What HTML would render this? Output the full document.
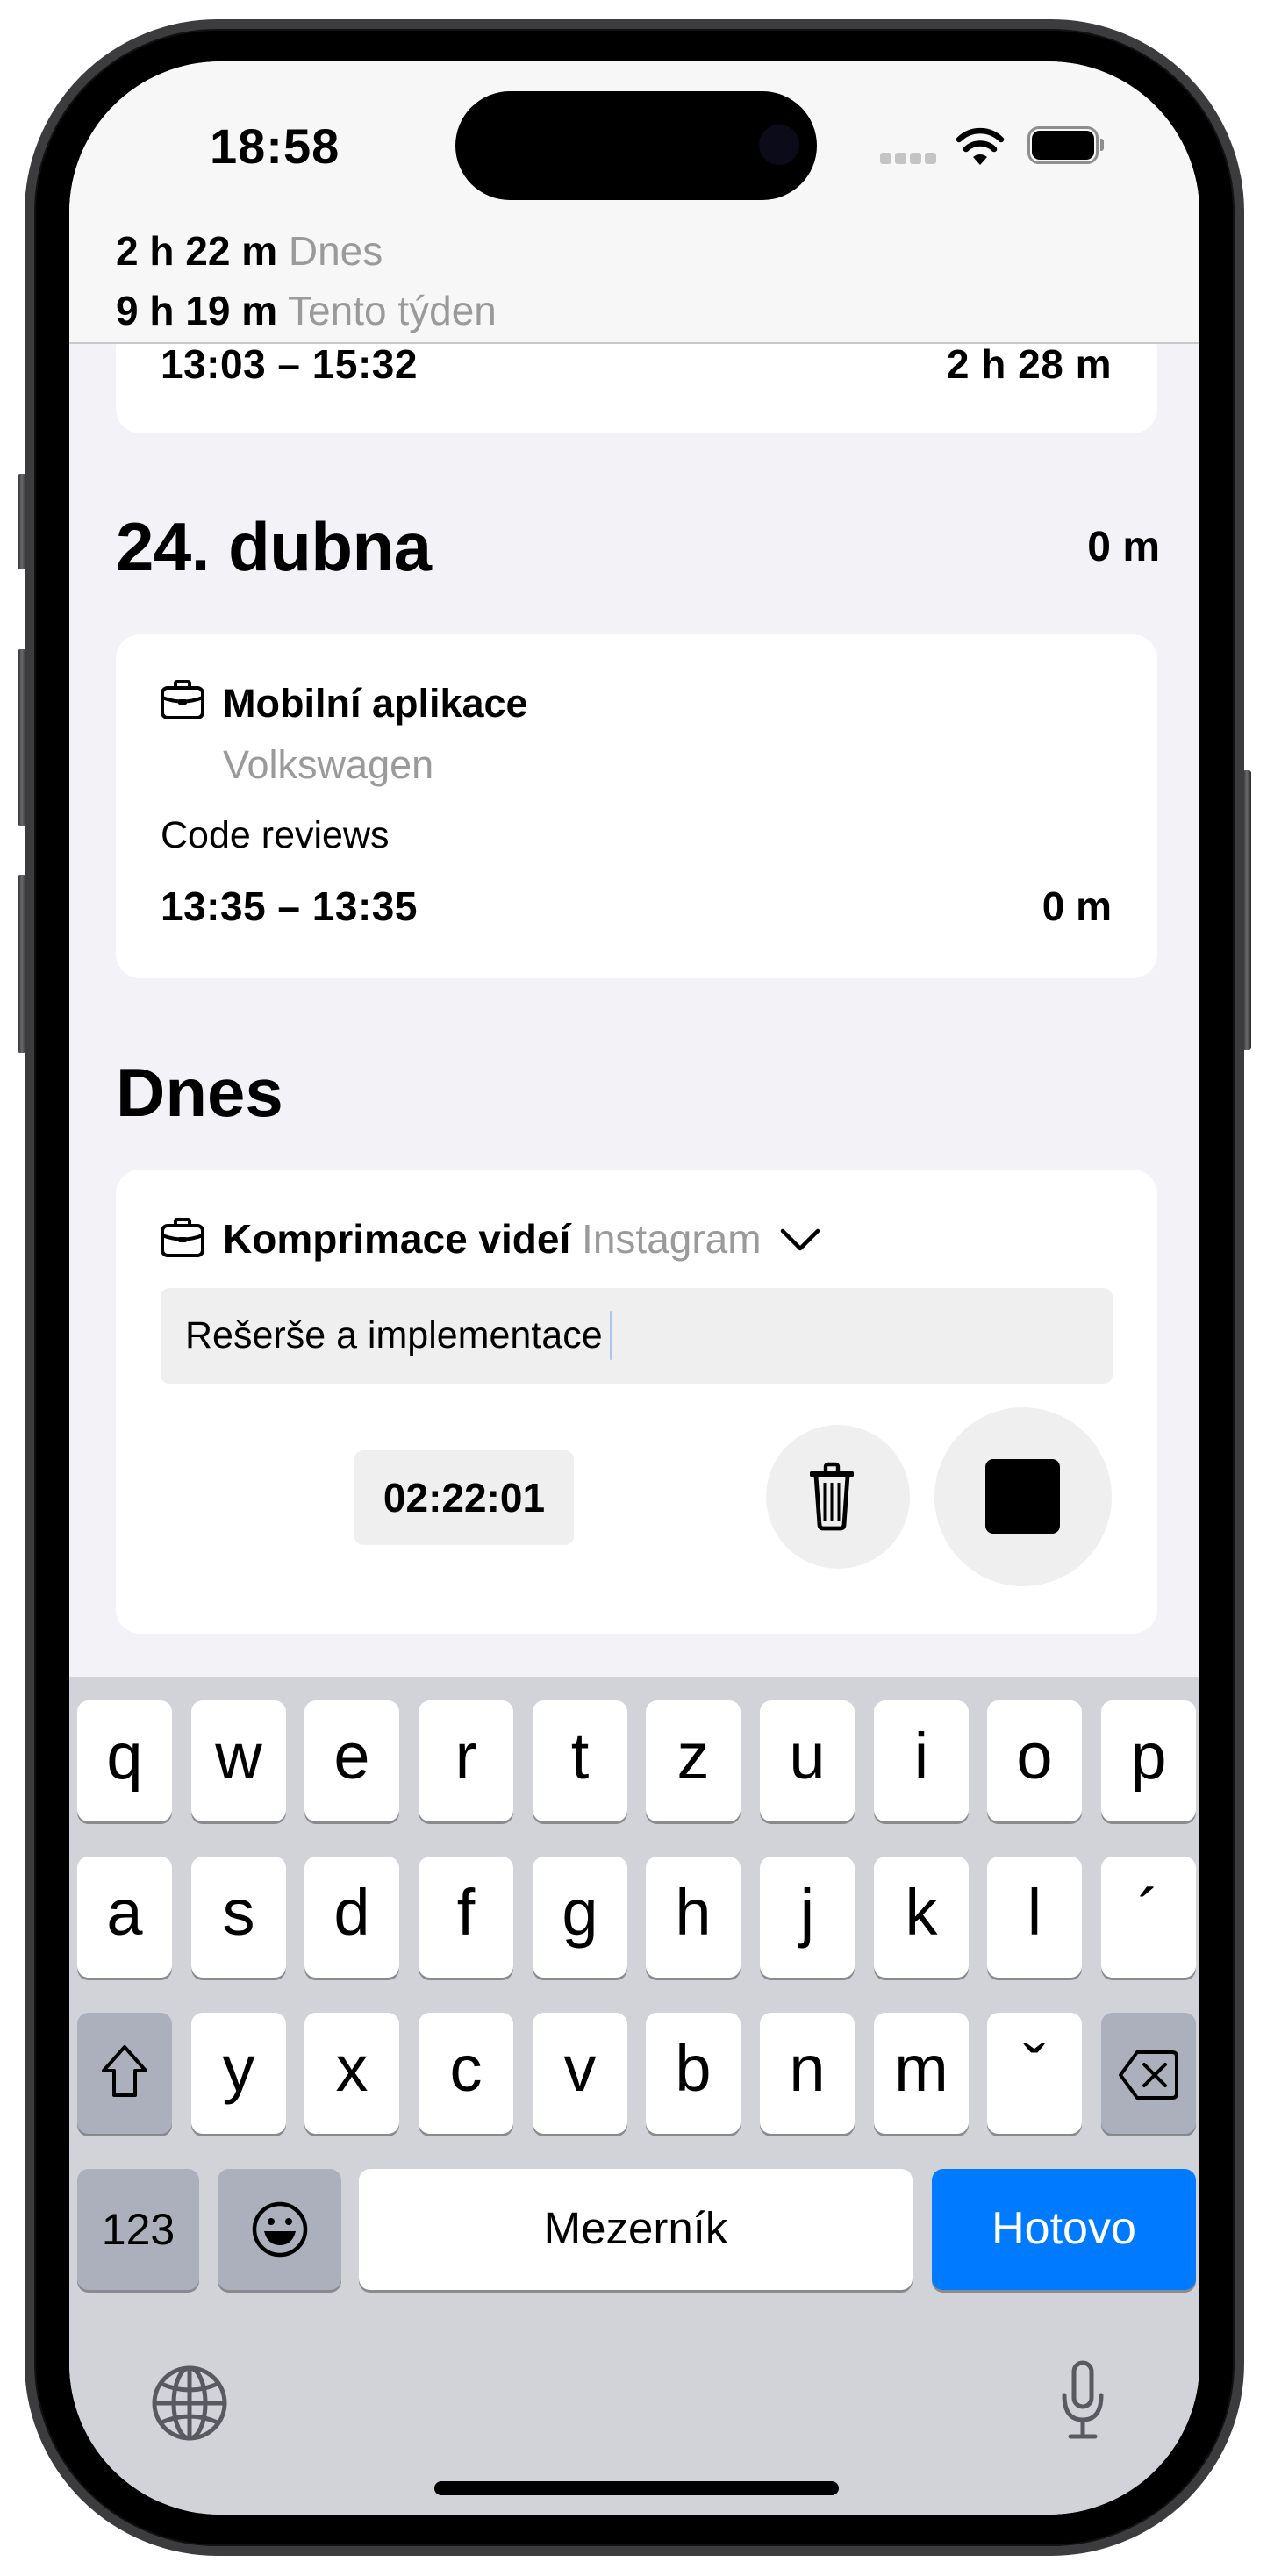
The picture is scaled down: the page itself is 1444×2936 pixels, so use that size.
<!DOCTYPE html>
<html><head><meta charset="utf-8"><style>
*{margin:0;padding:0;box-sizing:border-box}
body{width:1444px;height:2936px;background:#fff;position:relative;overflow:hidden;font-family:"Liberation Sans","DejaVu Sans",sans-serif;color:#000}
.a{position:absolute}
.btn{position:absolute;background:linear-gradient(90deg,#2a2a2a,#6a6a6a,#2a2a2a);border-radius:3px}
.frame{left:28px;top:22px;width:1390px;height:2891px;border-radius:220px;background:#000;border:11px solid #3c3c3e;box-shadow:inset 0 0 0 2px #111}
.screen{left:79px;top:70px;width:1288px;height:2796px;border-radius:172px;background:#f2f2f7;overflow:hidden}
.t{position:absolute;white-space:nowrap}
.card{position:absolute;background:#fff;border-radius:28px}
.key{position:absolute;width:108px;height:138px;background:#fff;border-radius:13px;box-shadow:0 3px 0 #898a8d;text-align:center;font-size:74px;line-height:128px;color:#000}
.sp{background:#abb0bc}
</style></head><body>
<div class="btn" style="left:20px;top:540px;width:10px;height:109px"></div>
<div class="btn" style="left:20px;top:740px;width:10px;height:201px"></div>
<div class="btn" style="left:20px;top:997px;width:10px;height:203px"></div>
<div class="btn" style="left:1416px;top:878px;width:10px;height:319px"></div>
<div class="a frame"></div>
<div class="a screen">
  <div class="card" style="left:53px;top:300px;width:1187px;height:124px"></div>
  <div class="t" style="left:104px;top:319px;font-size:46px;font-weight:bold;line-height:52px;letter-spacing:0.5px">13:03 – 15:32</div>
  <div class="t" style="right:100px;top:319px;font-size:46px;font-weight:bold;line-height:52px;letter-spacing:0.5px">2 h 28 m</div>

  <div class="t" style="left:53px;top:508px;font-size:78px;font-weight:bold;line-height:90px;letter-spacing:-0.5px">24. dubna</div>
  <div class="t" style="right:45px;top:528px;font-size:48px;font-weight:bold;line-height:52px">0 m</div>

  <div class="card" style="left:53px;top:653px;width:1187px;height:392px"></div>
  <svg class="a" style="left:104px;top:705px" width="50" height="45" viewBox="0 0 50 45"><path d="M17 8V4q0-2 2-2h12q2 0 2 2v4" fill="none" stroke="#000" stroke-width="4"/><rect x="2" y="9" width="46" height="34" rx="6" fill="none" stroke="#000" stroke-width="4"/><path d="M2 20q23 9 46 0" fill="none" stroke="#000" stroke-width="4"/><rect x="20" y="22" width="10" height="6" rx="2"/></svg>
  <div class="t" style="left:175px;top:707px;font-size:45px;font-weight:bold;line-height:50px">Mobilní aplikace</div>
  <div class="t" style="left:175px;top:777px;font-size:45px;color:#9a9a9a;line-height:50px">Volkswagen</div>
  <div class="t" style="left:104px;top:858px;font-size:43px;line-height:48px">Code reviews</div>
  <div class="t" style="left:104px;top:937px;font-size:46px;font-weight:bold;line-height:52px;letter-spacing:0.5px">13:35 – 13:35</div>
  <div class="t" style="right:100px;top:937px;font-size:46px;font-weight:bold;line-height:52px">0 m</div>

  <div class="t" style="left:53px;top:1130px;font-size:78px;font-weight:bold;line-height:90px">Dnes</div>

  <div class="card" style="left:53px;top:1263px;width:1187px;height:529px"></div>
  <svg class="a" style="left:104px;top:1318px" width="50" height="45" viewBox="0 0 50 45"><path d="M17 8V4q0-2 2-2h12q2 0 2 2v4" fill="none" stroke="#000" stroke-width="4"/><rect x="2" y="9" width="46" height="34" rx="6" fill="none" stroke="#000" stroke-width="4"/><path d="M2 20q23 9 46 0" fill="none" stroke="#000" stroke-width="4"/><rect x="20" y="22" width="10" height="6" rx="2"/></svg>
  <div class="t" style="left:175px;top:1316px;font-size:46px;line-height:52px"><b>Komprimace videí</b> <span style="color:#9a9a9a">Instagram</span></div>
  <svg class="a" style="left:810px;top:1330px" width="46" height="28" viewBox="0 0 46 28"><path d="M3 3l20 20 20-20" fill="none" stroke="#000" stroke-width="4.5" stroke-linecap="round" stroke-linejoin="round"/></svg>
  <div class="a" style="left:104px;top:1398px;width:1085px;height:109px;background:#efeff0;border-radius:10px"></div>
  <div class="t" style="left:132px;top:1427px;font-size:43px;line-height:50px">Rešerše a implementace</div>
  <div class="a" style="left:616px;top:1424px;width:3px;height:56px;background:#a7c6f4;border-radius:2px"></div>
  <div class="a" style="left:325px;top:1583px;width:250px;height:108px;background:#efeff0;border-radius:10px;text-align:center;font-size:46px;font-weight:bold;line-height:108px">02:22:01</div>
  <div class="a" style="left:794px;top:1554px;width:164px;height:164px;border-radius:50%;background:#efeff0"></div>
  <svg class="a" style="left:844px;top:1596px" width="50" height="80" viewBox="0 0 25 40"><path d="M9 6V3q0-1.5 1.5-1.5h4Q16 1.5 16 3v3" fill="none" stroke="#000" stroke-width="2.2"/><path d="M1 7h23" stroke="#000" stroke-width="3" stroke-linecap="round"/><path d="M3.5 8l2 28q.2 2 2.2 2h9.6q2 0 2.2-2l2-28" fill="none" stroke="#000" stroke-width="2.4"/><path d="M8.5 12v22M12.5 12v22M16.5 12v22" stroke="#000" stroke-width="1.5"/></svg>
  <div class="a" style="left:986px;top:1534px;width:202px;height:204px;border-radius:50%;background:#efeff0"></div>
  <div class="a" style="left:1044px;top:1593px;width:85px;height:85px;border-radius:9px;background:#000"></div>

  <div class="a" style="left:0;top:0;width:1288px;height:322px;background:#f7f7f7;border-bottom:2px solid #c9c9cc"></div>
  <div class="t" style="left:160px;top:66px;font-size:56px;font-weight:bold;line-height:62px;letter-spacing:1px">18:58</div>
  <div class="a" style="left:440px;top:34px;width:412px;height:124px;border-radius:62px;background:#000"></div>
  <div class="a" style="left:786px;top:72px;width:46px;height:46px;border-radius:50%;background:#0b0b1a"></div>
  <div class="a" style="left:924px;top:104px;width:13px;height:13px;border-radius:3px;background:#c4c4c6"></div>
  <div class="a" style="left:941px;top:104px;width:13px;height:13px;border-radius:3px;background:#c4c4c6"></div>
  <div class="a" style="left:958px;top:104px;width:13px;height:13px;border-radius:3px;background:#c4c4c6"></div>
  <div class="a" style="left:975px;top:104px;width:13px;height:13px;border-radius:3px;background:#c4c4c6"></div>
  <svg class="a" style="left:1010px;top:74px" width="56" height="44" viewBox="0 0 56 44"><path d="M28 44L20 35a12 12 0 0 1 16 0z"/><path d="M12 26a23 23 0 0 1 32 0" fill="none" stroke="#000" stroke-width="6.5" stroke-linecap="round"/><path d="M4 15a34 34 0 0 1 48 0" fill="none" stroke="#000" stroke-width="6.5" stroke-linecap="round"/></svg>
  <div class="a" style="left:1092px;top:74px;width:81px;height:43px;border:3px solid #8e8e90;border-radius:13px"></div>
  <div class="a" style="left:1097px;top:79px;width:71px;height:33px;background:#000;border-radius:9px"></div>
  <div class="a" style="left:1175px;top:88px;width:4px;height:14px;background:#8e8e90;border-radius:0 3px 3px 0"></div>
  <div class="t" style="left:53px;top:190px;font-size:46px;line-height:52px"><b>2 h 22 m</b> <span style="color:#9a9a9a">Dnes</span></div>
  <div class="t" style="left:53px;top:258px;font-size:46px;line-height:52px"><b>9 h 19 m</b> <span style="color:#9a9a9a">Tento týden</span></div>

  <div class="a" style="left:0;top:1841px;width:1288px;height:960px;background:#d1d3d9"></div>
  <div class="key" style="left:9px;top:1868px">q</div>
  <div class="key" style="left:139px;top:1868px">w</div>
  <div class="key" style="left:268px;top:1868px">e</div>
  <div class="key" style="left:398px;top:1868px">r</div>
  <div class="key" style="left:528px;top:1868px">t</div>
  <div class="key" style="left:657px;top:1868px">z</div>
  <div class="key" style="left:787px;top:1868px">u</div>
  <div class="key" style="left:917px;top:1868px">i</div>
  <div class="key" style="left:1046px;top:1868px">o</div>
  <div class="key" style="left:1176px;top:1868px">p</div>
  <div class="key" style="left:9px;top:2046px">a</div>
  <div class="key" style="left:139px;top:2046px">s</div>
  <div class="key" style="left:268px;top:2046px">d</div>
  <div class="key" style="left:398px;top:2046px">f</div>
  <div class="key" style="left:528px;top:2046px">g</div>
  <div class="key" style="left:657px;top:2046px">h</div>
  <div class="key" style="left:787px;top:2046px">j</div>
  <div class="key" style="left:917px;top:2046px">k</div>
  <div class="key" style="left:1046px;top:2046px">l</div>
  <div class="key" style="left:1176px;top:2046px">´</div>
  <div class="key sp" style="left:9px;top:2224px"><svg style="margin-top:36px" width="56" height="62" viewBox="0 0 56 62"><path d="M28 3L4 30h12v28h24V30h12z" fill="none" stroke="#000" stroke-width="4" stroke-linejoin="round"/></svg></div>
  <div class="key" style="left:139px;top:2224px">y</div>
  <div class="key" style="left:268px;top:2224px">x</div>
  <div class="key" style="left:398px;top:2224px">c</div>
  <div class="key" style="left:528px;top:2224px">v</div>
  <div class="key" style="left:657px;top:2224px">b</div>
  <div class="key" style="left:787px;top:2224px">n</div>
  <div class="key" style="left:917px;top:2224px">m</div>
  <div class="key" style="left:1046px;top:2224px">ˇ</div>
  <div class="key sp" style="left:1176px;top:2224px"><svg style="margin-top:42px" width="70" height="58" viewBox="0 0 70 58"><path d="M22 3h40q5 0 5 5v42q0 5-5 5H22L3 29z" fill="none" stroke="#000" stroke-width="4" stroke-linejoin="round"/><path d="M30 17l24 24M54 17L30 41" stroke="#000" stroke-width="4" stroke-linecap="round"/></svg></div>
  <div class="key sp" style="left:9px;top:2402px;width:139px;font-size:50px;line-height:138px">123</div>
  <div class="key sp" style="left:169px;top:2402px;width:141px"><svg style="margin-top:36px" width="66" height="66" viewBox="0 0 66 66"><circle cx="33" cy="33" r="29" fill="none" stroke="#000" stroke-width="4.5"/><circle cx="23" cy="24" r="4"/><circle cx="43" cy="24" r="4"/><path d="M15 35h36q-4 16-18 16T15 35z"/></svg></div>
  <div class="key" style="left:330px;top:2402px;width:631px;font-size:51px;line-height:136px">Mezerník</div>
  <div class="key" style="left:983px;top:2402px;width:301px;background:#007aff;color:#fff;font-size:52px;line-height:136px">Hotovo</div>
  <svg class="a" style="left:93px;top:2625px" width="88" height="88" viewBox="0 0 88 88"><g fill="none" stroke="#575a60" stroke-width="5"><circle cx="44" cy="44" r="40"/><ellipse cx="44" cy="44" rx="18" ry="40"/><path d="M44 4v80M4 44h80M12 22q32 14 64 0M12 66q32-14 64 0"/></g></svg>
  <svg class="a" style="left:1130px;top:2620px" width="50" height="92" viewBox="0 0 50 92"><g fill="none" stroke="#575a60" stroke-width="5" stroke-linecap="round"><rect x="15" y="3" width="20" height="50" rx="10"/><path d="M4 40q0 28 21 28t21-28M25 68v18M11 87h28"/></g></svg>
  <div class="a" style="left:416px;top:2758px;width:461px;height:16px;border-radius:8px;background:#000"></div>
</div>
</body></html>
